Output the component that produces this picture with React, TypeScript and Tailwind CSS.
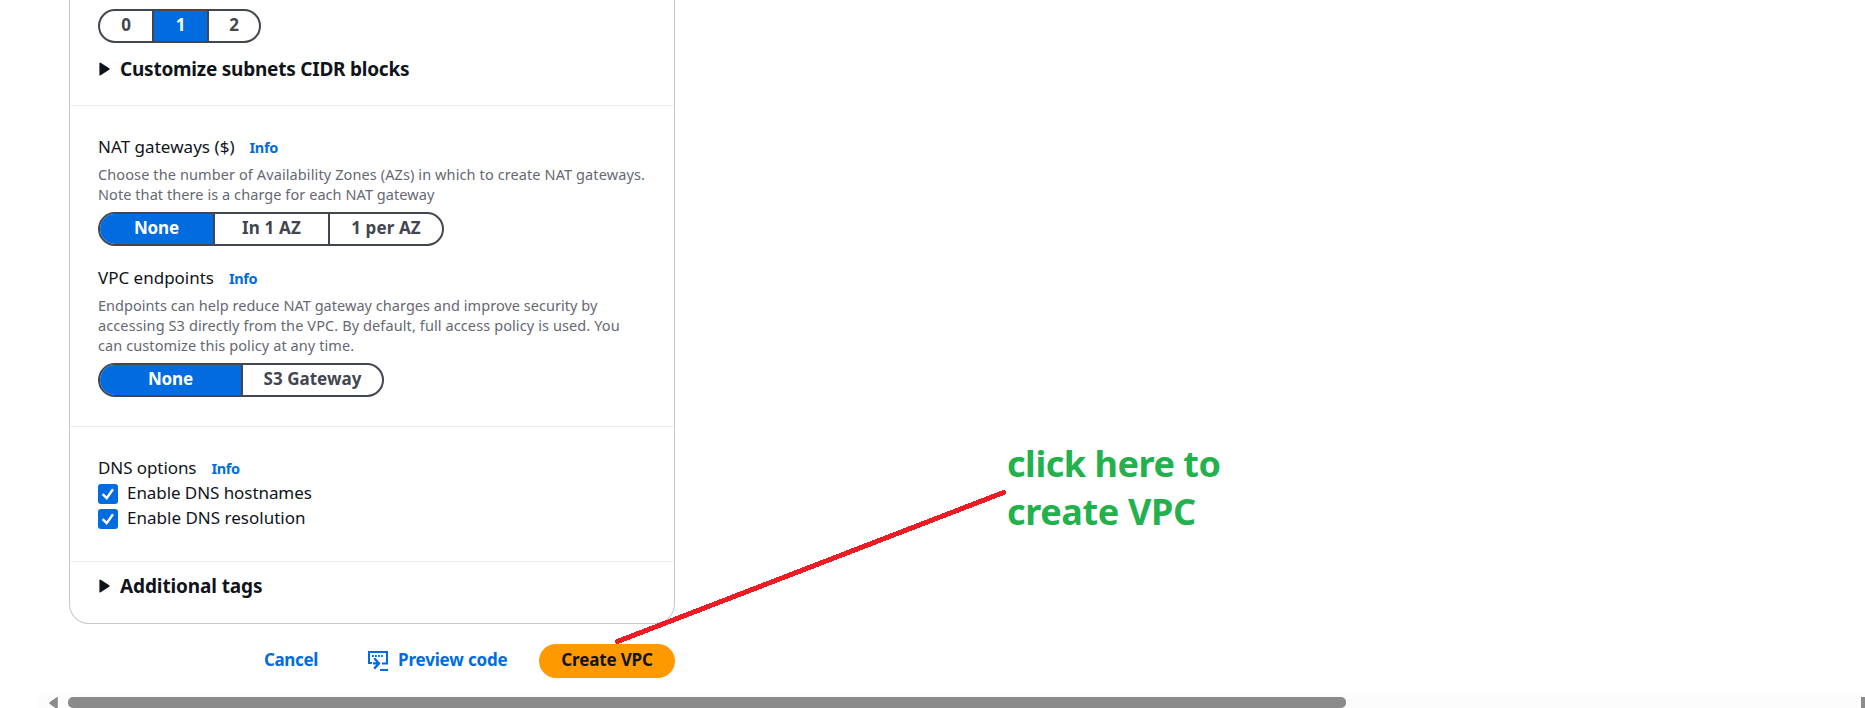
import type { ReactNode } from 'react';
import clsx from 'clsx';

type Option = { label: string; width: string; tracking?: string };

function Segmented({ options, selected }: { options: Option[]; selected: number }) {
  return (
    <div className="flex h-[34px] w-fit overflow-hidden rounded-full border-2 border-[#424650] bg-white">
      {options.map((o, i) => (
        <button
          key={o.label}
          className={clsx(
            'h-full pb-0.5 text-center text-[17px] leading-[28px] font-bold whitespace-nowrap',
            o.width,
            o.tracking,
            i < options.length - 1 && 'border-r-2 border-[#424650]',
            i === selected ? 'bg-[#006ce0] text-white' : 'text-[#424650]',
          )}
        >
          {o.label}
        </button>
      ))}
    </div>
  );
}

function Expander({ children, tracking }: { children: ReactNode; tracking: string }) {
  return (
    <div className="flex h-6 items-center">
      <svg width="12" height="14" viewBox="0 0 12 14" className="ml-px shrink-0" aria-hidden="true">
        <path d="M1.2 1.3 L9.8 7 L1.2 12.7 Z" fill="#0f141a" stroke="#0f141a" strokeWidth="1.6" strokeLinejoin="round" />
      </svg>
      <h3 className={clsx('ml-[9px] text-[19px] leading-6 font-bold whitespace-nowrap', tracking)}>{children}</h3>
    </div>
  );
}

function FieldLabel({ children, tracking }: { children: ReactNode; tracking: string }) {
  return (
    <div className="flex h-6 items-baseline gap-[15px] whitespace-nowrap">
      <span className={clsx('text-[17px] leading-6', tracking)}>{children}</span>
      <a className="text-[14.5px] leading-5 font-bold tracking-[-0.35px] text-[#006ce0]">Info</a>
    </div>
  );
}

function CheckRow({ children, tracking }: { children: ReactNode; tracking: string }) {
  return (
    <label className="flex h-5 items-start">
      <svg width="20" height="20" viewBox="0 0 20 20" className="shrink-0" aria-hidden="true">
        <rect width="20" height="20" rx="3" fill="#006ce0" />
        <path d="M4.6 10.2 L8.7 14.2 L15 5.2" fill="none" stroke="#fff" strokeWidth="2.4" />
      </svg>
      <span className={clsx('-mt-px ml-[9px] text-[17px] leading-5 whitespace-nowrap', tracking)}>{children}</span>
    </label>
  );
}

function CodeIcon() {
  return (
    <svg width="20" height="20" viewBox="0 0 20 20" fill="none" stroke="#006ce0" strokeWidth="2" aria-hidden="true">
      <path d="M4 12 H1 V1 H19 V12.6 H14" />
      <path d="M4 5 H15.5" strokeDasharray="1.8 1.2" />
      <path d="M5 12.4 H10.5 M6.2 7.2 L11 12.4 L6.2 17.6" strokeWidth="2.3" />
      <path d="M12 19 H20" />
    </svg>
  );
}

export default function App() {
  return (
    <div className="relative flex h-[708px] w-full flex-col overflow-hidden bg-white font-['Noto_Sans',sans-serif] text-[#0f141a]">
      <main className="ml-[69px] w-[606px]">
        <div className="h-[624px] rounded-b-[20px] border-x border-b border-[#c6c6cd]">
          <section className="flex h-[106px] flex-col gap-3.5 border-b border-[#ebebf0] pt-[9px] pl-7">
            <Segmented
              selected={1}
              options={[
                { label: '0', width: 'w-[54px]' },
                { label: '1', width: 'w-[55px]' },
                { label: '2', width: 'w-[50px]' },
              ]}
            />
            <Expander tracking="tracking-[-0.229px]">Customize subnets CIDR blocks</Expander>
          </section>

          <section className="h-[321px] border-b border-[#ebebf0] pt-[29px] pl-7">
            <FieldLabel tracking="tracking-[0.04px]">NAT gateways ($)</FieldLabel>
            <p className="mt-[5px] mb-2 text-[14.5px] leading-5 whitespace-nowrap text-[#656871]">
              <span className="block tracking-[0.107px]">
                Choose the number of Availability Zones (AZs) in which to create NAT gateways.
              </span>
              <span className="block tracking-[0.068px]">Note that there is a charge for each NAT gateway</span>
            </p>
            <Segmented
              selected={0}
              options={[
                { label: 'None', width: 'w-[115px]', tracking: 'tracking-[-0.1px]' },
                { label: 'In 1 AZ', width: 'w-[115px]', tracking: 'tracking-[0.2px]' },
                { label: '1 per AZ', width: 'w-[112px]', tracking: 'tracking-[0.12px]' },
              ]}
            />
            <div className="mt-5">
              <FieldLabel tracking="tracking-[-0.01px]">VPC endpoints</FieldLabel>
            </div>
            <p className="mt-[5px] mb-2 text-[14.5px] leading-5 whitespace-nowrap text-[#656871]">
              <span className="block tracking-[0.04px]">
                Endpoints can help reduce NAT gateway charges and improve security by
              </span>
              <span className="block tracking-[0.104px]">
                accessing S3 directly from the VPC. By default, full access policy is used. You
              </span>
              <span className="block tracking-[0.094px]">can customize this policy at any time.</span>
            </p>
            <Segmented
              selected={0}
              options={[
                { label: 'None', width: 'w-[143px]', tracking: 'tracking-[-0.1px]' },
                { label: 'S3 Gateway', width: 'w-[139px]', tracking: 'tracking-[0.02px]' },
              ]}
            />
          </section>

          <section className="h-[135px] border-b border-[#ebebf0] pt-[29px] pl-7">
            <FieldLabel tracking="tracking-[-0.08px]">DNS options</FieldLabel>
            <div className="mt-1 flex flex-col gap-[5px]">
              <CheckRow tracking="tracking-[-0.07px]">Enable DNS hostnames</CheckRow>
              <CheckRow tracking="tracking-[0.01px]">Enable DNS resolution</CheckRow>
            </div>
          </section>

          <section className="pt-3 pl-7">
            <Expander tracking="tracking-[-0.115px]">Additional tags</Expander>
          </section>
        </div>

        <div className="mt-5 flex h-[34px] justify-end text-[17px] leading-[32px] font-bold whitespace-nowrap">
          <button className="pb-0.5 tracking-[-0.34px] text-[#006ce0]">Cancel</button>
          <button className="ml-[50px] flex gap-[10px] text-[#006ce0]">
            <span className="mt-[7px]">
              <CodeIcon />
            </span>
            <span className="w-[109px] text-left tracking-[-0.16px]">Preview code</span>
          </button>
          <button className="ml-8 w-[136px] rounded-full bg-[#ff9900] pb-0.5 text-center tracking-[-0.16px]">
            Create VPC
          </button>
        </div>
      </main>

      <div className="mt-[15px] ml-[39px] flex h-[15px] items-start bg-[#fcfcfc] pt-1">
        <svg width="10" height="12" viewBox="0 0 10 12" className="ml-2.5" aria-hidden="true">
          <path d="M8 0.8 L1 6 L8 11.2 Z" fill="#8b8b8b" stroke="#8b8b8b" strokeWidth="1.6" strokeLinejoin="round" />
        </svg>
        <div className="ml-[9px] h-[11px] w-[1278px] rounded-[5px] bg-[#8b8b8b]" />
        <div className="ml-auto h-[11px] w-1 bg-[#8b8b8b]" />
      </div>

      <svg width="400" height="170" viewBox="610 480 400 170" className="absolute top-[480px] left-[610px]" aria-hidden="true">
        <path d="M617.5 641.5 L1003.5 492.5" stroke="#ed1c24" strokeWidth="5" strokeLinecap="round" shapeRendering="crispEdges" />
      </svg>
      <p className="absolute top-[440px] left-[1007px] text-[36px] leading-[48px] font-bold whitespace-nowrap text-[#22b14c]">
        <span className="block tracking-[-0.464px]">click here to</span>
        <span className="block tracking-[-0.36px]">create VPC</span>
      </p>
    </div>
  );
}
